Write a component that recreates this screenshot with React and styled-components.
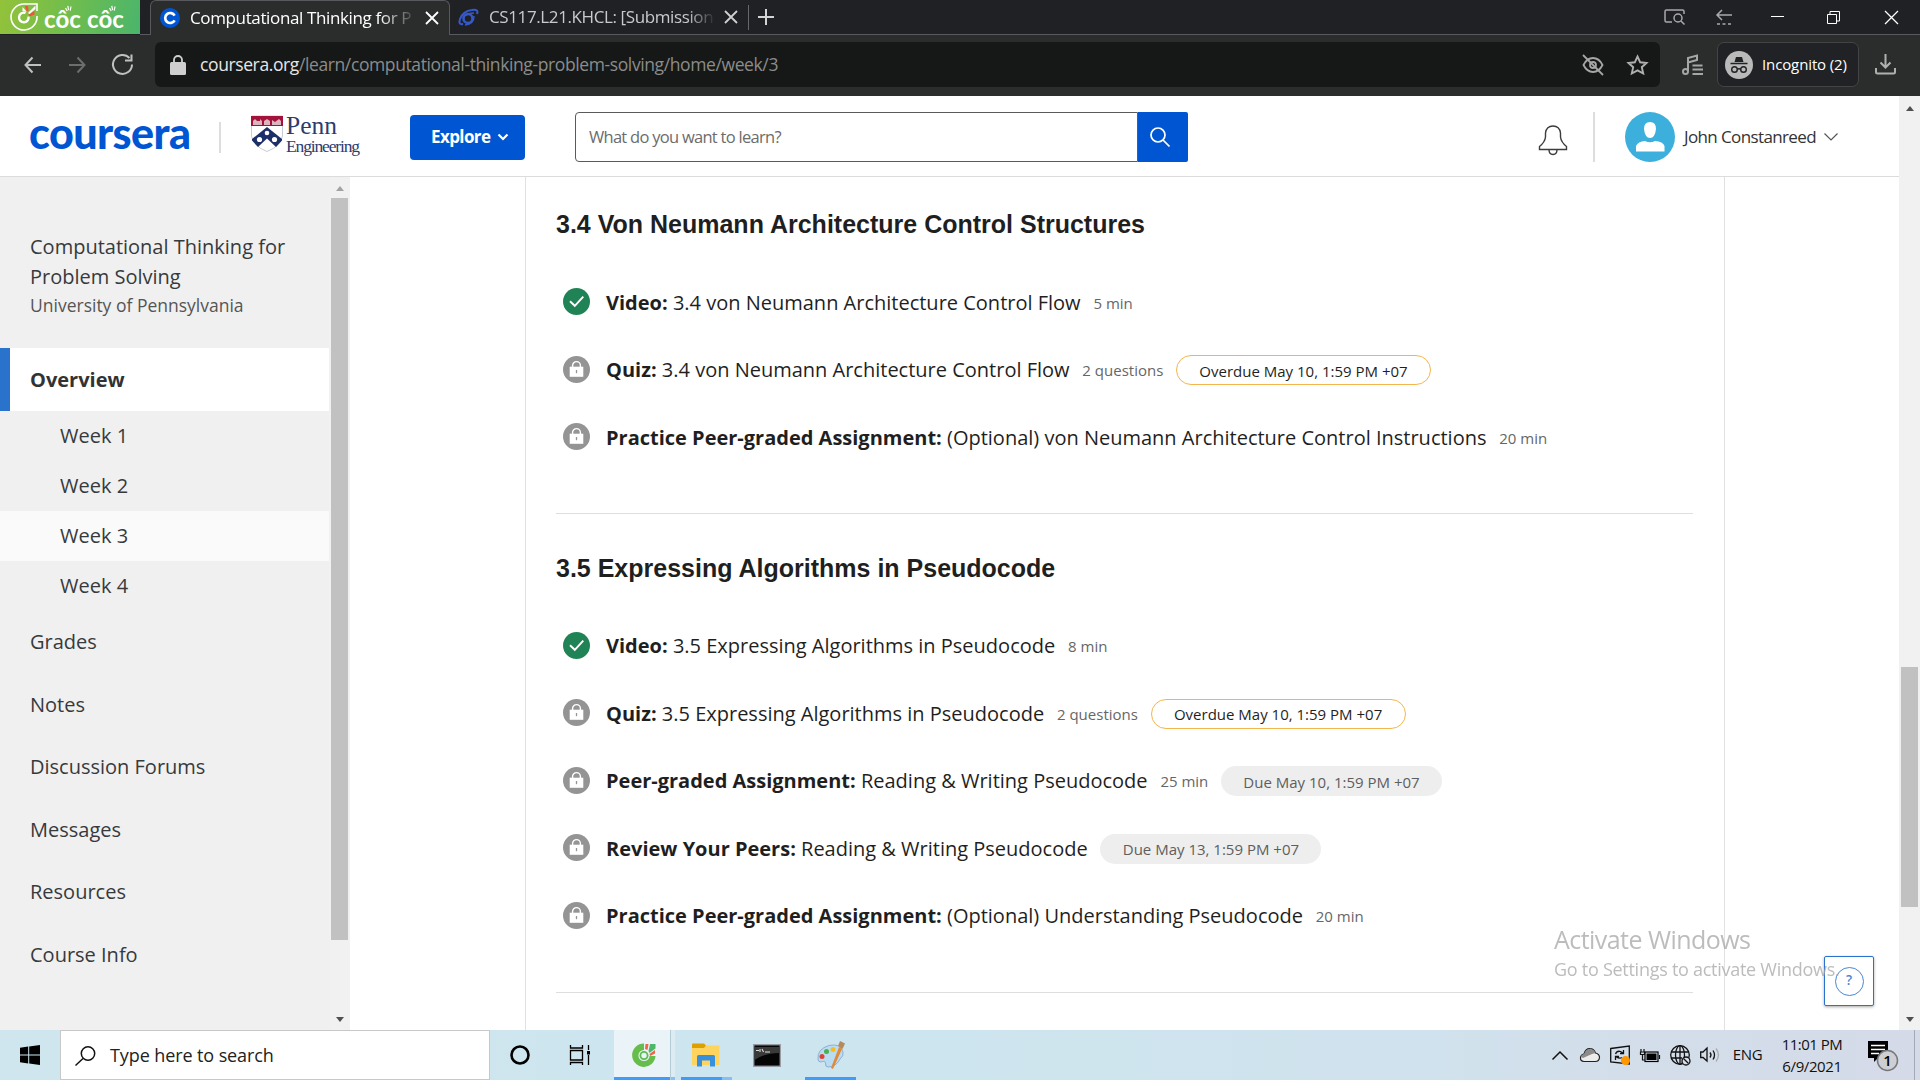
import React from 'react';
import styled, { createGlobalStyle } from 'styled-components';

const OPEN = '"Open Sans", "Noto Sans", sans-serif';
const SERIF = '"Liberation Serif", serif';
const ROUND = 'Lato, "Open Sans", sans-serif';

const Global = createGlobalStyle`
  *, *::before, *::after { box-sizing: border-box; }
  html, body { margin: 0; padding: 0; background: #fff; }
  body { width: 1920px; height: 1080px; overflow: hidden; font-family: ${OPEN}; }
  svg { display: block; flex: none; overflow: visible; }
  h1, h2, p, ul { margin: 0; padding: 0; }
`;

const Screen = styled.div`
  position: relative;
  width: 1920px;
  height: 1080px;
  display: flex;
  flex-direction: column;
  overflow: hidden;
`;

const Text = styled.span`
  font-family: ${(p) => p.$font || OPEN};
  font-size: ${(p) => p.$size}px;
  font-weight: ${(p) => p.$weight || 400};
  letter-spacing: ${(p) => p.$track || 0}px;
  color: ${(p) => p.$color || '#222'};
  white-space: pre;
  line-height: ${(p) => (p.$line ? `${p.$line}px` : 1.3)};
`;

/* ---------- browser ---------- */
const TabStrip = styled.div`
  height: 35px;
  flex: none;
  display: flex;
  background: #202125;
`;
const Brand = styled.div`
  width: 140px;
  height: 34px;
  display: flex;
  align-items: center;
  padding-left: 10px;
  background: linear-gradient(100deg, #93c23a 0%, #6fbd4e 50%, #4bb56c 100%);
`;
const BrandName = styled(Text)`
  margin: 3px 0 0 6px;
`;
const Gap = styled.div`
  width: ${(p) => p.$w}px;
  flex: ${(p) => (p.$grow ? 1 : 'none')};
  border-bottom: 1px solid #58595c;
`;
const ActiveTab = styled.div`
  width: 300px;
  height: 35px;
  display: flex;
  align-items: center;
  padding: 0 10px 0 9px;
  background: #2b2c2c;
  border: 1px solid #58595c;
  border-bottom: 0;
  border-radius: 6px 6px 0 0;
`;
const IdleTab = styled.div`
  width: 298px;
  height: 35px;
  display: flex;
  align-items: center;
  padding: 0 11px 0 9px;
  border-bottom: 1px solid #58595c;
`;
const TabTitle = styled.div`
  flex: none;
  width: 225px;
  margin-left: 10px;
  margin-right: 11px;
  padding-top: 1px;
  display: flex;
  mask-image: linear-gradient(90deg, #000 ${(p) => p.$fade}%, transparent 101%);
`;
const NewTab = styled.div`
  height: 35px;
  display: flex;
  align-items: center;
  border-bottom: 1px solid #58595c;
  gap: 9px;
`;
const TabRule = styled.div`
  width: 1px;
  height: 25px;
  background: #66676a;
`;
const WindowButtons = styled.div`
  width: 262px;
  height: 35px;
  display: flex;
  align-items: center;
  border-bottom: 1px solid #58595c;
`;
const Slot = styled.div`
  width: ${(p) => p.$w}px;
  height: ${(p) => p.$h || 34}px;
  flex: none;
  display: flex;
  align-items: center;
  justify-content: center;
  padding-left: ${(p) => p.$shift || 0}px;
`;
const Toolbar = styled.div`
  height: 61px;
  flex: none;
  display: flex;
  align-items: center;
  background: #2b2c2c;
  padding: 0 0 2px 10px;
`;
const Omnibox = styled.div`
  width: 1505px;
  flex: none;
  height: 45px;
  border-radius: 6px;
  background: #161817;
  display: flex;
  align-items: center;
  padding: 0 0 0 15px;
`;
const Url = styled.div`
  flex: 1;
  margin-left: 14px;
  display: flex;
`;
const Incognito = styled.div`
  width: 142px;
  flex: none;
  height: 45px;
  border: 1px solid #434445;
  border-radius: 7px;
  background: #212225;
  display: flex;
  align-items: center;
  padding-left: 7px;
  gap: 9px;
`;

/* ---------- coursera header ---------- */
const Viewport = styled.div`
  height: 934px;
  flex: none;
  display: flex;
`;
const Page = styled.div`
  width: 1899px;
  flex: none;
  display: flex;
  flex-direction: column;
`;
const Header = styled.header`
  height: 81px;
  flex: none;
  display: flex;
  align-items: center;
  border-bottom: 1px solid #dcdcdc;
  padding: 2px 0 0 29px;
`;
const Logo = styled.div`
  width: 190px;
  height: 52px;
  display: flex;
  align-items: center;
  padding-bottom: 8px;
`;
const Rule = styled.div`
  width: 2px;
  height: ${(p) => p.$h}px;
  background: #ddd;
`;
const Penn = styled.div`
  width: 159px;
  margin-left: 30px;
  height: 42px;
  display: flex;
  gap: 3px;
`;
const PennWords = styled.div`
  display: flex;
  flex-direction: column;
`;
const Explore = styled.div`
  width: 115px;
  height: 45px;
  background: #0056d2;
  border-radius: 4px;
  display: flex;
  align-items: center;
  padding-left: 21px;
  gap: 8px;
`;
const Search = styled.div`
  width: 613px;
  height: 50px;
  margin-left: 50px;
  display: flex;
`;
const SearchField = styled.div`
  width: 563px;
  height: 50px;
  border: 1px solid #5a5a5a;
  border-radius: 4px 0 0 4px;
  display: flex;
  align-items: center;
  padding-left: 13px;
`;
const SearchButton = styled.div`
  width: 50px;
  height: 50px;
  border-radius: 0 2px 2px 0;
  background: #0056d2;
  display: flex;
  align-items: center;
  justify-content: center;
  padding-right: 6px;
`;
const Account = styled.div`
  margin-left: 350px;
  display: flex;
  align-items: center;
`;
const Bell = styled.div`
  padding-top: 4px;
`;

/* ---------- body ---------- */
const Body = styled.div`
  flex: 1;
  display: flex;
  min-height: 0;
`;
const Sidebar = styled.aside`
  width: 329px;
  background: #f0f0f0;
  display: flex;
  flex-direction: column;
`;
const CourseInfo = styled.div`
  height: 171px;
  padding: 55px 0 0 30px;
  display: flex;
  flex-direction: column;
`;
const NavItem = styled.div`
  height: ${(p) => (p.$active ? 63 : 62.5)}px;
  display: flex;
  align-items: center;
  padding-left: ${(p) => (p.$active ? 20 : 30)}px;
  ${(p) => p.$active && 'border-left: 10px solid #2a73cc; background: #fff;'}
`;
const WeekItem = styled.div`
  height: 50px;
  display: flex;
  align-items: center;
  padding: 0 0 1px 60px;
  background: ${(p) => (p.$current ? '#fafafa' : 'transparent')};
`;
const Scrollbar = styled.div`
  width: 21px;
  flex: none;
  background: #f1f1f1;
  display: flex;
  flex-direction: column;
  align-items: center;
  padding: ${(p) => p.$pad};
`;
const Arrow = styled.div`
  width: 0;
  height: 0;
  border: 4.5px solid transparent;
  border-top-width: ${(p) => (p.$down ? 5 : 0)}px;
  border-bottom-width: ${(p) => (p.$down ? 0 : 5)}px;
  border-top-color: ${(p) => (p.$down ? p.$color : 'transparent')};
  border-bottom-color: ${(p) => (p.$down ? 'transparent' : p.$color)};
`;
const Thumb = styled.div`
  width: 17px;
  height: ${(p) => p.$h}px;
  margin: ${(p) => p.$top}px 0 auto;
  background: #c1c1c1;
`;
const Main = styled.main`
  flex: 1;
  padding-left: 175px;
`;
const Panel = styled.div`
  width: 1200px;
  height: 100%;
  border: 1px solid #e1e1e1;
  border-width: 0 1px;
  padding: 0 31px 0 30px;
`;
const Section = styled.section`
  padding: ${(p) => p.$top}px 0 ${(p) => p.$bottom}px;
  border-bottom: 1px solid #dedede;
`;
const SectionTitle = styled.h2`
  height: 30px;
  margin-bottom: 28.5px;
  font: 700 25px/30px "Liberation Sans", Arial, sans-serif;
  color: #1f1f1f;
  white-space: nowrap;
`;
const Item = styled.div`
  height: 67.5px;
  display: flex;
  align-items: center;
  padding-left: 7px;
`;
const ItemText = styled.div`
  margin-left: 16px;
  display: flex;
  align-items: center;
  padding-top: 2.4px;
`;
const Meta = styled(Text)`
  margin: 1px 0 0 12.8px;
`;
const Pill = styled.div`
  height: 30px;
  width: ${(p) => (p.$overdue ? 255 : 221)}px;
  margin-left: 12.7px;
  border-radius: 15px;
  display: flex;
  align-items: center;
  justify-content: center;
  padding-top: 2px;
  background: ${(p) => (p.$overdue ? '#fff' : '#eee')};
  border: ${(p) => (p.$overdue ? '1px solid #f3b64c' : '0')};
`;

/* ---------- overlays ---------- */
const Watermark = styled.div`
  position: absolute;
  left: 1554px;
  top: 923px;
  display: flex;
  flex-direction: column;
  gap: 2px;
  z-index: 3;
  opacity: 0.75;
`;
const Help = styled.div`
  position: absolute;
  left: 1824px;
  top: 956px;
  width: 50px;
  height: 50px;
  border: 1.5px solid #2a73cc;
  border-radius: 2px;
  background: #fff;
  box-shadow: 0 1px 3px rgba(0, 0, 0, 0.35);
  display: flex;
  align-items: center;
  justify-content: center;
`;
const HelpRing = styled.div`
  width: 29px;
  height: 29px;
  border: 1.5px solid #4a86d4;
  border-radius: 50%;
  display: flex;
  align-items: center;
  justify-content: center;
`;

/* ---------- taskbar ---------- */
const Taskbar = styled.div`
  height: 50px;
  flex: none;
  display: flex;
  background: linear-gradient(90deg, #cfe6ee 0%, #cde5ee 50%, #d0e2ed 75%, #d3deea 85%, #d5dae8 100%);
`;
const TaskSearch = styled.div`
  width: 430px;
  height: 50px;
  background: #fff;
  border: 1px solid #c8c8c8;
  display: flex;
  align-items: center;
  padding: 1px 0 0 14px;
  gap: 14px;
`;
const TaskSlot = styled.div`
  width: ${(p) => p.$w}px;
  height: 50px;
  display: flex;
  align-items: center;
  justify-content: center;
  padding-left: ${(p) => p.$shift || 0}px;
  background: ${(p) => (p.$active ? '#eaf3f7' : 'transparent')};
  box-shadow: ${(p) => (p.$open ? 'inset 0 -3px #419cf9' : 'none')};
`;
const TaskStack = styled.div`
  width: ${(p) => p.$w}px;
  height: 50px;
  border-left: ${(p) => (p.$edge ? '1px solid #b4ccd6' : '0')};
  background: ${(p) => (p.$edge ? '#dcecf2' : 'transparent')};
  box-shadow: inset 0 -3px #85bff8;
`;
const Spacer = styled.div`
  width: ${(p) => p.$w}px;
  flex: none;
`;
const Tray = styled.div`
  margin-left: auto;
  width: 375px;
  display: flex;
  align-items: center;
`;
const Clock = styled.div`
  width: 80px;
  display: flex;
  flex-direction: column;
  align-items: center;
`;
const ShowDesktop = styled.div`
  width: 6px;
  height: 50px;
  margin-left: auto;
  border-left: 1px solid #a3aab5;
`;

const Svg = ({ w, h, children, stroke = 'none', sw = 1.5, fill = 'none' }) => (
  <svg width={w} height={h} viewBox={`0 0 ${w} ${h}`} fill={fill} stroke={stroke} strokeWidth={sw}>
    {children}
  </svg>
);

const CocMark = () => (
  <Svg w={28} h={28} stroke="#fff" sw={1.6}>
    <path d="M27 13A13 13 0 1 1 14 1H27V8" />
    <path d="M15.500 10A4.800 4.800 0 1 0 18.500 13.500" strokeWidth="2.400" />
    <path d="M12.500 8V4L17 9Z" fill="#fff" stroke="none" />
    <path d="M15 3H18L18.500 8L16.500 8.500ZM18.500 11.500L24.500 8V11.500L19.500 13.500Z" fill="#f0543c" stroke="none" />
    <path d="M18 10L25.500 2.500V6L19.500 11Z" fill="#fff" stroke="none" />
  </Svg>
);

const Rays = () => (
  <Svg w={7} h={7} stroke="#fff" sw={1.2}>
    <path d="M.5 3L2.200 6M2.800 .8L3.600 5.200M6 1.500L5.200 5.600" />
  </Svg>
);

const RaySet = styled.div`
  position: absolute;
  left: ${(p) => p.$x}px;
  top: 5px;
`;

const Cross = ({ s = 12, color = '#fff', sw = 1.8 }) => (
  <Svg w={s} h={s} stroke={color} sw={sw}>
    <path d={`M0 0L${s} ${s}M${s} 0L0 ${s}`} />
  </Svg>
);

const Shield = () => (
  <Svg w={32} h={36}>
    <path d="M.5 0H31.5V20Q30 30 16 35.5Q2 30 .5 20Z" fill="#fff" stroke="#b9bfd0" strokeWidth=".8" />
    <path d="M0 0H32V10H0Z" fill="#a3123a" />
    <path d="M2 9V5L4 3L6 5H9V3L11 5V9ZM13 9V5L16 3L19 5V9ZM21 9V4L24 6L28 3L30 5V9Z" fill="#dcb4c0" />
    <path d="M16 11L31 23L31 24.5L25 31L16 22.500L7 31L1 24.5V23Z" fill="#1c2f68" />
    <circle cx="16" cy="17" r="2.3" fill="#fff" />
    <circle cx="8.5" cy="23.5" r="2.6" fill="#fff" />
    <circle cx="23.5" cy="23.5" r="2.6" fill="#fff" />
  </Svg>
);

const DoneIcon = () => (
  <Svg w={27} h={27}>
    <circle cx="13.5" cy="13.5" r="13.5" fill="#208355" />
    <path d="M7 13.3L11.8 17.8L20.3 8.7" stroke="#fff" strokeWidth="1.9" />
  </Svg>
);
const LockIcon = () => (
  <Svg w={27} h={27}>
    <circle cx="13.5" cy="13.5" r="13.5" fill="#949494" />
    <path d="M9.6 11V9.6A3.9 4 0 0 1 17.4 9.6V11" stroke="#fff" strokeWidth="1.4" />
    <path d="M6.7 10.7H20.3V20.8H6.7Z" fill="#fff" />
    <path d="M13.5 14V17.2" stroke="#949494" strokeWidth="1.3" />
  </Svg>
);

const sections = [
  {
    title: '3.4 Von Neumann Architecture Control Structures',
    top: 32.4,
    bottom: 43.1,
    items: [
      { done: true, kind: 'Video:', name: '3.4 von Neumann Architecture Control Flow', meta: '5 min' },
      { kind: 'Quiz:', name: '3.4 von Neumann Architecture Control Flow', meta: '2 questions', overdue: 'Overdue May 10, 1:59 PM +07' },
      { kind: 'Practice Peer-graded Assignment:', name: '(Optional) von Neumann Architecture Control Instructions', meta: '20 min' },
    ],
  },
  {
    title: '3.5 Expressing Algorithms in Pseudocode',
    top: 38.5,
    bottom: 43.5,
    items: [
      { done: true, kind: 'Video:', name: '3.5 Expressing Algorithms in Pseudocode', meta: '8 min' },
      { kind: 'Quiz:', name: '3.5 Expressing Algorithms in Pseudocode', meta: '2 questions', overdue: 'Overdue May 10, 1:59 PM +07' },
      { kind: 'Peer-graded Assignment:', name: 'Reading & Writing Pseudocode', meta: '25 min', due: 'Due May 10, 1:59 PM +07' },
      { kind: 'Review Your Peers:', name: 'Reading & Writing Pseudocode', due: 'Due May 13, 1:59 PM +07' },
      { kind: 'Practice Peer-graded Assignment:', name: '(Optional) Understanding Pseudocode', meta: '20 min' },
    ],
  },
];

const Browser = () => (
  <>
    <TabStrip>
      <Brand>
        <CocMark />
        <BrandName $font={ROUND} $size={24} $weight={700} $color="#fff" $track={0.1}>côc côc</BrandName>
        <RaySet $x={65}><Rays /></RaySet>
        <RaySet $x={109}><Rays /></RaySet>
      </Brand>
      <Gap $w={10} />
      <ActiveTab>
        <Svg w={20} h={20}>
          <circle cx="10" cy="10" r="10" fill="#0056d2" />
          <path d="M14.6 7.6A5 5 0 1 0 14.6 12.4" stroke="#fff" strokeWidth="2.7" />
        </Svg>
        <TabTitle $fade={84}>
          <Text $size={17} $color="#fff" $track={-0.37}>Computational Thinking for P</Text>
        </TabTitle>
        <Cross />
      </ActiveTab>
      <IdleTab>
        <Svg w={20} h={18} stroke="#3659c9" sw={2}>
          <path d="M4 16Q-1 17 1 11Q4 3 13 2Q20 1 18 6" />
          <circle cx="9" cy="10.500" r="4.500" strokeWidth="2.600" />
          <path d="M15 8Q15 16 6 17M4 9Q9 5 15 5" strokeWidth="1.500" />
        </Svg>
        <TabTitle $fade={88}>
          <Text $size={17} $color="#c9cacc" $track={-0.39}>CS117.L21.KHCL: [Submission</Text>
        </TabTitle>
        <Cross color="#d0d0d0" />
      </IdleTab>
      <NewTab>
        <TabRule />
        <Svg w={16} h={16} stroke="#d4d4d4" sw={2}><path d="M8 0V16M0 8H16" /></Svg>
      </NewTab>
      <Gap $grow />
      <WindowButtons>
        <Slot $w={32}>
          <Svg w={21} h={16} stroke="#a9a9ab" sw={1.5}>
            <path d="M8 13H2.5Q1 13 1 11.5V2.500Q1 1 2.500 1H18.500Q20 1 20 2.500V5" />
            <circle cx="14" cy="9" r="4" /><path d="M17 12L20.500 15.500" />
          </Svg>
        </Slot>
        <Slot $w={68}>
          <Svg w={17} h={16} stroke="#a9a9ab" sw={1.5}>
            <path d="M16 6H1M6 1L1 6L6 11" /><path d="M1 15H17" strokeDasharray="3 2.500" />
          </Svg>
        </Slot>
        <Slot $w={38}><Svg w={13} h={3} stroke="#fff" sw={1}><path d="M0 .5H13" /></Svg></Slot>
        <Slot $w={74}>
          <Svg w={13} h={13} stroke="#fff" sw={1}><path d="M.5 3.500H9.500V12.500H.5ZM3 3V.5H12.500V10H10" /></Svg>
        </Slot>
        <Slot $w={42}><Cross s={13} sw={1.300} /></Slot>
      </WindowButtons>
    </TabStrip>
    <Toolbar>
      <Slot $w={45}><Svg w={17} h={16} stroke="#c0c0c0" sw={2}><path d="M17 8H1.500M8.500 .5L1.500 8L8.500 15.500" /></Svg></Slot>
      <Slot $w={45}><Svg w={17} h={16} stroke="#6c6d6d" sw={2}><path d="M0 8H15.500M8.500 .5L15.500 8L8.500 15.500" /></Svg></Slot>
      <Slot $w={45}>
        <Svg w={21} h={21} stroke="#c0c0c0" sw={2}><path d="M17.500 4A9.500 9.500 0 1 0 20 10.500M19.500 .5V6.500H13" /></Svg>
      </Slot>
      <Spacer $w={10} />
      <Omnibox>
        <Svg w={16} h={20}>
          <path d="M4 8V5A4 4 0 0 1 12 5V8" stroke="#cfcfcf" strokeWidth="1.800" />
          <rect y="7" width="16" height="13" rx="1.500" fill="#cfcfcf" />
        </Svg>
        <Url>
          <Text $size={17.5} $color="#e6e6e6" $track={-0.39}>coursera.org</Text>
          <Text $size={17.5} $color="#8b8c8c" $track={-0.39}>/learn/computational-thinking-problem-solving/home/week/3</Text>
        </Url>
        <Slot $w={45}>
          <Svg w={22} h={20} stroke="#a6a6a6" sw={1.800}>
            <path d="M1.500 10Q5 3 11 3Q17 3 20.500 10Q17 17 11 17Q5 17 1.500 10Z" />
            <circle cx="11" cy="10" r="3" /><path d="M1 0L21 20" />
          </Svg>
        </Slot>
        <Slot $w={45}>
          <Svg w={21} h={20} stroke="#b0b0b0" sw={1.900}>
            <path d="M10.500 1.500L13.200 7.300L19.500 8L14.800 12.200L16.200 18.500L10.500 15.300L4.800 18.500L6.200 12.200L1.500 8L7.800 7.300Z" />
          </Svg>
        </Slot>
      </Omnibox>
      <Slot $w={57} $h={45} $shift={8}>
        <Svg w={21} h={21} stroke="#a6a6a6" sw={2}>
          <circle cx="3.500" cy="17.500" r="2.500" /><path d="M6 17V4L15 1.500V6L6 8.500M10.500 11.500H20.500M10.500 15.500H21M10.500 20H21" />
        </Svg>
      </Slot>
      <Incognito>
        <Svg w={28} h={28}>
          <circle cx="14" cy="14" r="14" fill="#b9bab9" />
          <path d="M9.500 11L11 6H17L18.500 11Z" fill="#212225" />
          <path d="M5.500 12.500H22.500M12 18.500Q14 17 16 18.500" stroke="#212225" strokeWidth="1.400" />
          <circle cx="9.500" cy="18.500" r="2.800" stroke="#212225" strokeWidth="1.400" />
          <circle cx="18.500" cy="18.500" r="2.800" stroke="#212225" strokeWidth="1.400" />
        </Svg>
        <Text $size={15} $color="#fff" $track={-0.12}>Incognito (2)</Text>
      </Incognito>
      <Slot $w={52} $h={45}>
        <Svg w={21} h={21} stroke="#b0b0b0" sw={2}>
          <path d="M10.500 0V13M5.500 8.500L10.500 13.500L15.500 8.500M1 14V18Q1 19.500 2.500 19.500H18.500Q20 19.500 20 18V14" />
        </Svg>
      </Slot>
    </Toolbar>
  </>
);

const SiteHeader = () => (
  <Header>
    <Logo><Text $font={ROUND} $size={43} $weight={900} $color="#0056d2" $track={-0.55}>coursera</Text></Logo>
    <Rule $h={31} />
    <Penn>
      <Shield />
      <PennWords>
        <Text $font={SERIF} $size={25.5} $line={20} $color="#2d3c6e">Penn</Text>
        <Text $font={SERIF} $size={17.5} $line={20} $color="#2d3c6e" $track={-1.15}>Engineering</Text>
      </PennWords>
    </Penn>
    <Explore>
      <Text $size={17} $weight={700} $color="#fff" $track={-0.6}>Explore</Text>
      <Svg w={10} h={6} stroke="#fff" sw={2.200}><path d="M.5 .5L5 5L9.500 .5" /></Svg>
    </Explore>
    <Search>
      <SearchField><Text $size={16.5} $color="#6c6c6c" $track={-0.72}>What do you want to learn?</Text></SearchField>
      <SearchButton>
        <Svg w={20} h={20} stroke="#fff" sw={1.700}><circle cx="8" cy="8" r="7" /><path d="M13 13L19.500 19.500" /></Svg>
      </SearchButton>
    </Search>
    <Account>
      <Bell>
        <Svg w={30} h={32} stroke="#3c3c3c" sw={1.400}>
          <path d="M1.500 26.500V23.500Q7 19 7.500 14V10Q8.500 3 15 3Q21.500 3 22.500 10V14Q23 19 28.500 23.500V26.500ZM11 26.500Q11 31.500 15 31.500Q19 31.500 19 26.500" />
        </Svg>
      </Bell>
      <Spacer $w={25} />
      <Rule $h={50} />
      <Spacer $w={30} />
      <Svg w={50} h={50}>
        <circle cx="25" cy="25" r="25" fill="#3cafdc" />
        <path d="M25 10Q31 10 31 17Q30 26 25 26Q20 26 19 17Q19 10 25 10ZM11 39.500V34Q13 29.500 20 29Q25 31.500 30 29Q38 29.500 39.500 34V39.500Z" fill="#fff" />
      </Svg>
      <Spacer $w={9} />
      <Text $size={17} $color="#333" $track={-0.62}>John Constanreed</Text>
      <Spacer $w={8} />
      <Svg w={14} h={8} stroke="#555" sw={1.200}><path d="M.5 .5L7 7L13.500 .5" /></Svg>
    </Account>
  </Header>
);

const TaskIcons = () => (
  <>
    <TaskSlot $w={60}>
      <Svg w={20} h={20} fill="#000"><path d="M0 2.800L8.200 1.600V9.500H0ZM9.200 1.500L20 0V9.500H9.200ZM0 10.500H8.200V18.400L0 17.200ZM9.200 10.500H20V20L9.200 18.500Z" /></Svg>
    </TaskSlot>
    <TaskSearch>
      <Svg w={21} h={20} stroke="#111" sw={1.500}><circle cx="13" cy="7.500" r="6.700" /><path d="M8 12.500L.5 19.500" /></Svg>
      <Text $size={18} $color="#222" $track={-0.1}>Type here to search</Text>
    </TaskSearch>
    <TaskSlot $w={60}><Svg w={20} h={20} stroke="#000" sw={2.600}><circle cx="10" cy="10" r="8.500" /></Svg></TaskSlot>
    <TaskSlot $w={60}>
      <Svg w={20} h={20} stroke="#000" sw={1.300}>
        <path d="M.5 5.500H12.500V15H.5ZM.5 0V3H12.500V0M.5 20V17.500H12.500V20M18.500 0V5M18.500 10V20" /><path d="M17 6H20V9.500H17Z" fill="#000" stroke="none" />
      </Svg>
    </TaskSlot>
    <Spacer $w={4} />
    <TaskSlot $w={56} $active $open $shift={3}>
      <Svg w={24} h={24}>
        <path d="M12 .5A11.700 11.700 0 1 0 23.500 13H12Z" fill="#66bd4c" />
        <circle cx="12" cy="12.500" r="5.600" fill="#eaf3f7" />
        <circle cx="12" cy="12.500" r="3.600" stroke="#5dbb56" strokeWidth="1.800" fill="#eaf3f7" />
        <path d="M13 6L13.500 1L16.500 1L15.500 7ZM17.500 11L23 7V10.500L18 13Z" fill="#f0644a" />
        <path d="M16.500 8L18 1H23.500V5.500L17.500 10Z" fill="#4cb96a" />
      </Svg>
    </TaskSlot>
    <TaskStack $w={5} $edge />
    <Spacer $w={6} />
    <TaskSlot $w={41} $open $shift={8}>
      <Svg w={28} h={24}>
        <path d="M0 1.500Q0 .5 1 .5H12L14 2.500V8H0Z" fill="#dca000" />
        <path d="M0 5H12L14 2.500H27.500V22H0Z" fill="#ffd45e" />
        <path d="M5 23.500V13.500Q5 12 6.500 12H21.500Q23 12 23 13.500V23.500H18V17.500H10V23.500Z" fill="#3790dc" />
      </Svg>
    </TaskSlot>
    <TaskStack $w={10} />
    <TaskSlot $w={70}>
      <Svg w={28} h={23}>
        <rect x=".7" y=".7" width="26.600" height="21.600" fill="#050505" stroke="#999da3" strokeWidth="1.400" />
        <path d="M1.500 3H26.500V9Q12 9 1.500 16Z" fill="#3a3a3a" />
        <path d="M3 6.500H6M7 5V8M9 5L10.500 8M12 8H17" stroke="#ddd" strokeWidth="1.100" />
      </Svg>
    </TaskSlot>
    <Spacer $w={3} />
    <TaskSlot $w={51} $open>
      <Svg w={28} h={28}>
        <path d="M1 18Q0 8 12 4.500Q24 2 26 11Q27 15 23 18Q19 26 11 26Q8 26 8.500 22Q8 19 4 21Q1 21 1 18Z" fill="#b9dcf3" stroke="#7fa6c6" strokeWidth=".8" />
        <circle cx="5" cy="15.500" r="2.500" fill="#dd4233" /><circle cx="9.500" cy="10.500" r="2.500" fill="#4caf50" /><circle cx="16" cy="8.500" r="2.500" fill="#f6bd27" />
        <path d="M22 6L25 8L16 28L14 27Z" fill="#df8a3c" /><path d="M21 5L23 0L28 2.500L25.500 8Z" fill="#b58a5c" />
      </Svg>
    </TaskSlot>
  </>
);

const TrayIcons = () => (
  <Tray>
    <Slot $w={30}><Svg w={16} h={9} stroke="#111" sw={1.500}><path d="M.5 8.500L8 1L15.500 8.500" /></Svg></Slot>
    <Slot $w={30}>
      <Svg w={20} h={14}><path d="M4 13.500Q0 13 .5 9.500Q1 6.500 4 6Q5.500 .5 10 .7Q14 .7 15.500 5Q19.500 6 19.500 9.500Q19 13.500 15.500 13.500Z" fill="#ececec" stroke="#222" strokeWidth="1.200" /><path d="M1 9Q1 6.500 4 6Q6 1 10 1Q14 1 15.500 5L12 6L3 10Z" fill="#8b8b8b" /></Svg>
    </Slot>
    <Slot $w={30}>
      <Svg w={20} h={20} stroke="#111" sw={1.300}>
        <path d="M.7 3.500L19.300 1V19L.7 17Z" /><path d="M5.500 9Q7 5.500 10.500 6.500L13 8M13.500 5V8.500H10M12 12.500Q9.500 14 6.500 12M5.500 15V11.500H9" />
        <circle cx="15.500" cy="15.500" r="4.500" fill="#ff9800" stroke="none" />
      </Svg>
    </Slot>
    <Slot $w={30}>
      <Svg w={20} h={13} stroke="#111" sw={1.200}>
        <rect x="5" y="3" width="13" height="9.500" stroke="#000" /><rect x="6.500" y="4.500" width="10" height="6.500" fill="#000" stroke="none" />
        <path d="M19.500 6V10M1 0V3M4 0V3M.5 3H4.500V5.500H.5ZM2.500 6V11H5" />
      </Svg>
    </Slot>
    <Slot $w={30}>
      <Svg w={20} h={20} stroke="#111" sw={1.300}>
        <circle cx="10" cy="10" r="9.300" /><ellipse cx="10" cy="10" rx="4.500" ry="9.300" /><path d="M1 7H19M1 13H12M10 1V19" />
        <circle cx="16" cy="16" r="4" fill="#d6dce9" /><path d="M13.500 13.500L18.500 18.500" />
      </Svg>
    </Slot>
    <Slot $w={30}>
      <Svg w={20} h={18} stroke="#111" sw={1.300}>
        <path d="M.7 6H3L7 2V15L3 11.500H.7ZM10 6.500Q12 9 10 11.500M13 4.500Q16 9 13 13.500" /><path d="M16 2.500Q21 9 16 15.500" stroke="#aaa" />
      </Svg>
    </Slot>
    <Slot $w={45}><Text $size={15} $color="#111" $track={-0.3}>ENG</Text></Slot>
    <Spacer $w={2} />
    <Clock>
      <Text $size={15} $line={22} $color="#111" $track={-0.5}>11:01 PM</Text>
      <Text $size={15} $line={22} $color="#111" $track={-0.4}>6/9/2021</Text>
    </Clock>
    <Spacer $w={15} />
    <Svg w={32} h={32}>
      <path d="M1 2H21V19H11L7 23V19H1Z" fill="#000" /><path d="M4 6.500H18M4 10.500H18M4 14.500H12" stroke="#fff" strokeWidth="1.300" />
      <circle cx="20.500" cy="21.500" r="10" fill="#cdcfd3" stroke="#77797d" />
      <text x="20.500" y="27" textAnchor="middle" fontFamily="Open Sans" fontSize="15" fontWeight="600" fill="#000">1</text>
    </Svg>
    <ShowDesktop />
  </Tray>
);

export default function App() {
  return (
    <Screen>
      <Global />
      <Browser />
      <Viewport>
        <Page>
          <SiteHeader />
          <Body>
            <Sidebar>
              <CourseInfo>
                <Text $size={20} $line={30} $color="#373a3c">Computational Thinking for</Text>
                <Text $size={20} $line={30} $color="#373a3c">Problem Solving</Text>
                <Text $size={17.5} $line={26} $color="#555">University of Pennsylvania</Text>
              </CourseInfo>
              <NavItem $active><Text $size={20} $weight={700} $color="#333">Overview</Text></NavItem>
              {[1, 2, 3, 4].map((n) => (
                <WeekItem key={n} $current={n === 3}><Text $size={20} $color="#373a3c">Week {n}</Text></WeekItem>
              ))}
              {['Grades', 'Notes', 'Discussion Forums', 'Messages', 'Resources', 'Course Info'].map((n) => (
                <NavItem key={n}><Text $size={20} $color="#373a3c">{n}</Text></NavItem>
              ))}
            </Sidebar>
            <Scrollbar $pad="9px 0 8px">
              <Arrow $color="#a3a3a3" />
              <Thumb $h={742} $top={7} />
              <Arrow $down $color="#505050" />
            </Scrollbar>
            <Main>
              <Panel>
                {sections.map((s) => (
                  <Section key={s.title} $top={s.top} $bottom={s.bottom}>
                    <SectionTitle>{s.title}</SectionTitle>
                    {s.items.map((it) => (
                      <Item key={it.kind}>
                        {it.done ? <DoneIcon /> : <LockIcon />}
                        <ItemText>
                          <Text $size={20} $weight={700} $color="#1f1f1f">{it.kind} </Text>
                          <Text $size={20} $color="#1f1f1f">{it.name}</Text>
                          {it.meta && <Meta $size={15} $color="#666">{it.meta}</Meta>}
                          {it.overdue && <Pill $overdue><Text $size={15} $color="#1f1f1f">{it.overdue}</Text></Pill>}
                          {it.due && <Pill><Text $size={15} $color="#5e5e5e">{it.due}</Text></Pill>}
                        </ItemText>
                      </Item>
                    ))}
                  </Section>
                ))}
              </Panel>
            </Main>
          </Body>
        </Page>
        <Scrollbar $pad="10px 0 8px">
          <Arrow $color="#505050" />
          <Thumb $h={240} $top={556} />
          <Arrow $down $color="#505050" />
        </Scrollbar>
      </Viewport>
      <Taskbar>
        <TaskIcons />
        <TrayIcons />
      </Taskbar>
      <Help><HelpRing><Text $size={13.5} $weight={600} $color="#4a86d4">?</Text></HelpRing></Help>
      <Watermark>
        <Text $size={25} $color="#a6a6a6" $track={-0.55}>Activate Windows</Text>
        <Text $size={18} $color="#a6a6a6" $track={-0.27}>Go to Settings to activate Windows.</Text>
      </Watermark>
    </Screen>
  );
}
